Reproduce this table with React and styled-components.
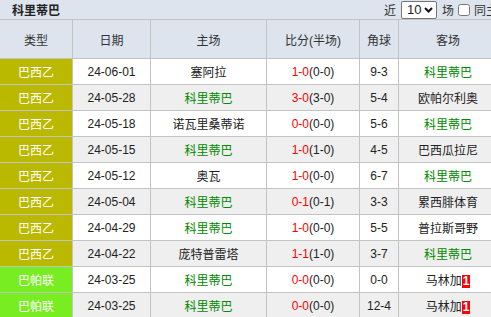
import styled, { createGlobalStyle } from "styled-components";

const GlobalStyle = createGlobalStyle`
  html, body {
    margin: 0;
    padding: 0;
    overflow: hidden;
    background: #fff;
  }
  body {
    font-family: "Liberation Sans", "Noto Sans CJK SC", sans-serif;
    font-size: 12px;
    color: #333;
  }
`;

const Panel = styled.div`
  width: 510px;
`;

const TitleBar = styled.div`
  display: flex;
  align-items: center;
  height: 19px;
  padding-left: 12px;
  background: #dde4ee;
  border-bottom: 1px solid #c3c3c3;
  white-space: nowrap;
`;

const Title = styled.h2`
  flex: 1;
  margin: 0;
  font-size: 12px;
  font-weight: bold;
  color: #222;
`;

const Controls = styled.div`
  display: flex;
  align-items: center;
  gap: 4px;
  color: #333;
`;

const SelectWrap = styled.span`
  position: relative;
  display: inline-flex;
  margin: 0 1px;
`;

const CountSelect = styled.select`
  appearance: none;
  width: 36px;
  height: 18px;
  margin: 0;
  padding: 0 0 0 5px;
  font-family: "Liberation Sans", sans-serif;
  font-size: 13px;
  color: #222;
  border: 1px solid #767676;
  border-radius: 2px;
  background: #fff;
`;

const Chevron = styled.svg`
  position: absolute;
  right: 4px;
  top: 6px;
  width: 9px;
  height: 6px;
  pointer-events: none;
`;

const Check = styled.input`
  width: 12px;
  height: 12px;
  margin: 0;
`;

const Table = styled.table`
  width: 498px;
  border-collapse: separate;
  border-spacing: 0;
  table-layout: fixed;
`;

const Head = styled.th`
  height: 38px;
  padding: 0;
  font-weight: normal;
  color: #333;
  background: #dde4ee;
  border-right: 1px solid #c3c3c3;
  border-bottom: 1px solid #c3c3c3;
  text-align: center;
`;

const Row = styled.tr`
  background: ${({ $alt }) => ($alt ? "#efefef" : "#fff")};
`;

const Cell = styled.td`
  height: 25px;
  padding: 0;
  text-align: center;
  white-space: nowrap;
  color: ${({ $home }) => ($home ? "#008a00" : "#222")};
  border-right: 1px solid #c3c3c3;
  border-bottom: 1px solid #c3c3c3;
`;

const League = styled(Cell)`
  color: #fff;
  background: ${({ $color }) => $color};
`;

const Goals = styled.span`
  color: #ff0000;
`;

const Badge = styled.span`
  display: inline-block;
  padding: 0 1px;
  line-height: 13px;
  color: #fff;
  font-weight: bold;
  background: #ff0000;
`;

const TEAM = "科里蒂巴";

const matches = [
  { league: "巴西乙", date: "24-06-01", home: "塞阿拉", ft: "1-0", ht: "0-0", corner: "9-3", away: TEAM },
  { league: "巴西乙", date: "24-05-28", home: TEAM, ft: "3-0", ht: "3-0", corner: "5-4", away: "欧帕尔利奥" },
  { league: "巴西乙", date: "24-05-18", home: "诺瓦里桑蒂诺", ft: "0-0", ht: "0-0", corner: "5-6", away: TEAM },
  { league: "巴西乙", date: "24-05-15", home: TEAM, ft: "1-0", ht: "1-0", corner: "4-5", away: "巴西瓜拉尼" },
  { league: "巴西乙", date: "24-05-12", home: "奥瓦", ft: "1-0", ht: "0-0", corner: "6-7", away: TEAM },
  { league: "巴西乙", date: "24-05-04", home: TEAM, ft: "0-1", ht: "0-1", corner: "3-3", away: "累西腓体育" },
  { league: "巴西乙", date: "24-04-29", home: TEAM, ft: "1-0", ht: "0-0", corner: "5-5", away: "普拉斯哥野" },
  { league: "巴西乙", date: "24-04-22", home: "庞特普雷塔", ft: "1-1", ht: "1-0", corner: "3-7", away: TEAM },
  { league: "巴帕联", date: "24-03-25", home: TEAM, ft: "0-0", ht: "0-0", corner: "0-0", away: "马林加", red: 1 },
  { league: "巴帕联", date: "24-03-25", home: TEAM, ft: "0-0", ht: "0-0", corner: "12-4", away: "马林加", red: 1 },
];

const leagueColors = {
  巴西乙: "#bbb800",
  巴帕联: "#78ee22",
};

export default function App() {
  return (
    <Panel>
      <GlobalStyle />
      <TitleBar>
        <Title>{TEAM}</Title>
        <Controls>
          近
          <SelectWrap>
            <CountSelect defaultValue="10">
              <option value="10">10</option>
              <option value="20">20</option>
            </CountSelect>
            <Chevron viewBox="0 0 9 6">
              <path d="M1 1l3.5 3.5L8 1" fill="none" stroke="#111" strokeWidth="2" />
            </Chevron>
          </SelectWrap>
          场
          <Check type="checkbox" />
          同主场
        </Controls>
      </TitleBar>
      <Table>
        <colgroup>
          <col style={{ width: 73 }} />
          <col style={{ width: 78 }} />
          <col style={{ width: 116 }} />
          <col style={{ width: 93 }} />
          <col style={{ width: 39 }} />
          <col />
        </colgroup>
        <thead>
          <tr>
            <Head>类型</Head>
            <Head>日期</Head>
            <Head>主场</Head>
            <Head>比分(半场)</Head>
            <Head>角球</Head>
            <Head>客场</Head>
          </tr>
        </thead>
        <tbody>
          {matches.map((m, i) => (
            <Row key={i} $alt={i % 2 === 1}>
              <League $color={leagueColors[m.league]}>{m.league}</League>
              <Cell>{m.date}</Cell>
              <Cell $home={m.home === TEAM}>{m.home}</Cell>
              <Cell>
                <Goals>{m.ft}</Goals>({m.ht})
              </Cell>
              <Cell>{m.corner}</Cell>
              <Cell $home={m.away === TEAM}>
                {m.away}
                {m.red && <Badge>{m.red}</Badge>}
              </Cell>
            </Row>
          ))}
        </tbody>
      </Table>
    </Panel>
  );
}
